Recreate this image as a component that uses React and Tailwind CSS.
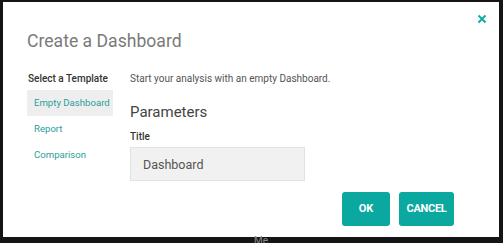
import React, { useState } from 'react'

const templates = ['Empty Dashboard', 'Report', 'Comparison']

export default function App() {
  const [selected, setSelected] = useState(0)

  return (
    <div className="relative h-[243px] w-[503px] overflow-hidden bg-[#151515] pl-[3px] pt-[2px] font-['Roboto',sans-serif]">
      <div className="relative h-[235px] w-[496px] bg-white">
        {/* close */}
        <button className="absolute right-[12px] top-[12px] text-[#13aaa1]">
          <svg width="10" height="10" viewBox="0 0 10 10" fill="none" stroke="currentColor" strokeWidth="2">
            <path d="M1.5 1.5l7 7M8.5 1.5l-7 7" />
          </svg>
        </button>

        <h2 className="pl-[24px] pt-[28px] text-[17.6px] leading-[22px] text-[#7a7a7a]">Create a Dashboard</h2>

        <div className="mt-[20px] flex">
          {/* template list */}
          <div className="ml-[24px] w-[86px] shrink-0">
            <div className="whitespace-nowrap pl-[1px] text-[10px] font-medium leading-[14px] text-[#333]">Select a Template</div>
            <div className="mt-[4px] flex flex-col">
              {templates.map((t, i) => (
                <button
                  key={t}
                  onClick={() => setSelected(i)}
                  className={`h-[26px] whitespace-nowrap pl-[7px] text-left text-[9.6px] text-[#2a9e9a] ${selected === i ? 'bg-[#eeeeee]' : ''}`}
                >
                  {t}
                </button>
              ))}
            </div>
          </div>

          {/* parameters */}
          <div className="ml-[17px]">
            <p className="whitespace-nowrap text-[10px] leading-[14px] text-[#555]">Start your analysis with an empty Dashboard.</p>
            <h3 className="mt-[16px] text-[15px] leading-[20px] text-[#444]">Parameters</h3>
            <div className="mt-[8px] text-[10px] font-medium leading-[14px] text-[#333]">Title</div>
            <input
              defaultValue="Dashboard"
              className="mt-[3px] h-[34px] w-[175px] border border-[#e2e2e2] bg-[#f1f1f1] px-[12px] text-[12.5px] text-[#555] outline-none"
            />
          </div>
        </div>

        {/* actions */}
        <div className="absolute left-[339px] top-[190px] flex gap-[9px]">
          <button className="h-[34px] w-[48px] rounded-[3px] bg-[#0aa89f] text-[11px] font-bold text-white">OK</button>
          <button className="h-[34px] w-[55px] rounded-[3px] bg-[#0aa89f] text-[11px] font-bold tracking-[-0.3px] text-white">CANCEL</button>
        </div>
      </div>
      <div className="absolute left-[254px] top-[235px] text-[10px] leading-[12px] text-[#888]">Me</div>
    </div>
  )
}
